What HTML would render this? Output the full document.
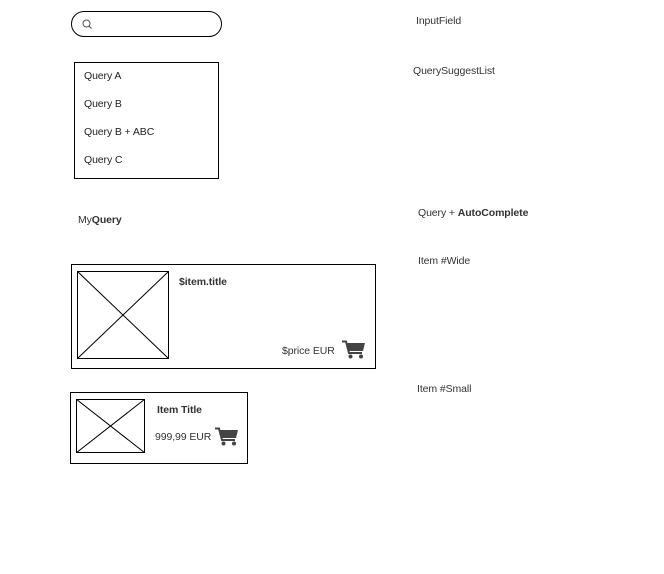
<!DOCTYPE html>
<html><head><meta charset="utf-8"><style>
body{margin:0;width:664px;height:574px;background:#fff;font-family:"Liberation Sans",sans-serif;font-size:10.5px;color:#222;position:relative;overflow:hidden;letter-spacing:-0.1px}
.a{position:absolute;white-space:nowrap;line-height:12px}
.box{position:absolute;border:1px solid #000;box-sizing:border-box}
b{font-weight:bold;color:#333}
.lbl{color:#333}
</style></head><body>
<div class="box" style="left:71px;top:11px;width:151px;height:26px;border-radius:13px"></div>
<svg class="a" style="left:81px;top:18px" width="13" height="13" viewBox="0 0 13 13"><circle cx="5.5" cy="5.5" r="3.5" fill="none" stroke="#555" stroke-width="1"/><line x1="8" y1="8" x2="10.5" y2="10.5" stroke="#555" stroke-width="1.2"/></svg>

<div class="box" style="left:74px;top:62px;width:145px;height:117px"></div>
<div class="a" style="left:84px;top:70px">Query A</div>
<div class="a" style="left:84px;top:98px">Query B</div>
<div class="a" style="left:84px;top:126px">Query B + ABC</div>
<div class="a" style="left:84px;top:154px">Query C</div>

<div class="a lbl" style="left:78px;top:214px">My<b>Query</b></div>

<div class="box" style="left:71px;top:264px;width:305px;height:105px"></div>
<svg class="a" style="left:77px;top:271px" width="92" height="88"><rect x="0.5" y="0.5" width="91" height="87" fill="none" stroke="#000"/><line x1="0" y1="0" x2="92" y2="88" stroke="#000"/><line x1="92" y1="0" x2="0" y2="88" stroke="#000"/></svg>
<div class="a" style="left:179px;top:276px"><b>$item.title</b></div>
<div class="a lbl" style="left:282px;top:345px">$price EUR</div>
<svg class="a" style="left:342px;top:340px" width="24" height="19" viewBox="0 0 24 19"><path d="M0 1.5H4L7 13H20" fill="none" stroke="#444" stroke-width="2"/><path d="M5 3H23L21 11H7Z" fill="#444"/><circle cx="8.5" cy="16.5" r="2" fill="#444"/><circle cx="19" cy="16.5" r="2" fill="#444"/></svg>

<div class="box" style="left:70px;top:392px;width:178px;height:72px"></div>
<svg class="a" style="left:76px;top:399px" width="69" height="54"><rect x="0.5" y="0.5" width="68" height="53" fill="none" stroke="#000"/><line x1="0" y1="0" x2="69" y2="54" stroke="#000"/><line x1="69" y1="0" x2="0" y2="54" stroke="#000"/></svg>
<div class="a" style="left:157px;top:404px"><b>Item Title</b></div>
<div class="a lbl" style="left:155px;top:431px">999,99 EUR</div>
<svg class="a" style="left:215px;top:427px" width="24" height="19" viewBox="0 0 24 19"><path d="M0 1.5H4L7 13H20" fill="none" stroke="#444" stroke-width="2"/><path d="M5 3H23L21 11H7Z" fill="#444"/><circle cx="8.5" cy="16.5" r="2" fill="#444"/><circle cx="19" cy="16.5" r="2" fill="#444"/></svg>

<div class="a lbl" style="left:416px;top:15px">InputField</div>
<div class="a lbl" style="left:413px;top:65px">QuerySuggestList</div>
<div class="a lbl" style="left:418px;top:207px">Query + <b>AutoComplete</b></div>
<div class="a lbl" style="left:418px;top:255px">Item #Wide</div>
<div class="a lbl" style="left:417px;top:383px">Item #Small</div>
</body></html>
